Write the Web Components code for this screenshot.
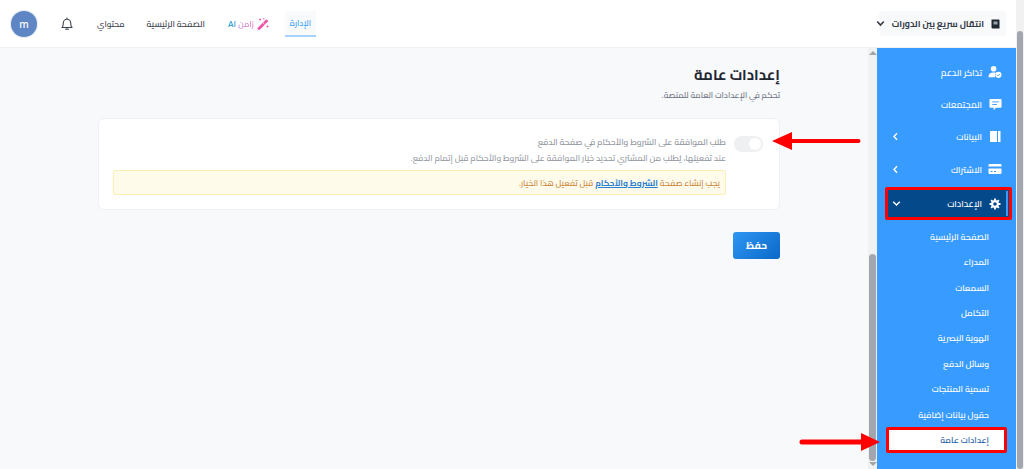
<!DOCTYPE html>
<html lang="ar" dir="rtl">
<head>
<meta charset="utf-8">
<title>إعدادات عامة</title>
<style>
  html, body { margin: 0; height: 469px; overflow: hidden; background: #fff; }
  body { font-family: Cairo, "Noto Sans Arabic", "DejaVu Sans", sans-serif; }
</style>
</head>
<body>
<app-shell>
  <top-bar slot="top"></top-bar>
  <side-nav slot="side"></side-nav>
  <settings-page slot="main"></settings-page>
</app-shell>

<script>
class AppShell extends HTMLElement {
  constructor() {
    super();
    this.attachShadow({ mode: 'open' });
    this.shadowRoot.innerHTML = `
      <style>
        :host { display:flex; height:469px; width:1024px; position:relative; }
        .page-bar { width:8px; flex:none; background:#f1f1f1; display:flex; flex-direction:column; padding-top:31px; box-sizing:border-box; }
        .page-bar i { display:block; flex:1; background:#a2a6ae; border-radius:4px; margin:0 1px; }
        .col { flex:1; display:flex; flex-direction:column; min-width:0; }
        .row { flex:1; display:flex; min-height:0; }
        .inner-bar { width:9px; flex:none; background:#f1f1f1; display:flex; flex-direction:column; align-items:center; justify-content:space-between; padding:3px 0; box-sizing:border-box; }
        .inner-bar b { width:0; height:0; border:4px solid transparent; border-top:0; border-bottom:4px solid #a3a3a3; }
        .inner-bar b.down { border-bottom:0; border-top:4px solid #a3a3a3; }
        .inner-bar i { display:block; width:7px; height:207px; background:#a2a6ae; border-radius:4px; margin-top:auto; margin-bottom:1px; }
        .red-arrow { position:absolute; }
      </style>
      <div class="page-bar"><i></i></div>
      <div class="col">
        <slot name="top"></slot>
        <div class="row">
          <slot name="side"></slot>
          <div class="inner-bar"><b></b><i></i><b class="down"></b></div>
          <slot name="main"></slot>
        </div>
      </div>
      <svg class="red-arrow" style="left:772px;top:131px" width="90" height="20" viewBox="0 0 90 20"><path d="M86.500 8H20V1L0 10l20 9v-7h66.500a2 2 0 0 0 0-4z" fill="#f00"/></svg>
      <svg class="red-arrow" style="left:799px;top:432px" width="82" height="20" viewBox="0 0 82 20"><path d="M3 7.500h59V1l19 9-19 9v-6.500H3a2.500 2.500 0 0 1 0-5z" fill="#f00"/></svg>
    `;
  }
}

class TopBar extends HTMLElement {
  constructor() {
    super();
    this.attachShadow({ mode: 'open' });
    this.shadowRoot.innerHTML = `
      <style>
        :host { display:flex; flex:none; height:48px; box-sizing:border-box; background:#fff; border-bottom:1px solid #f0f1f3; align-items:center; justify-content:space-between; padding:0 10px 0 11px; }
        .switch { display:flex; align-items:center; gap:7px; height:25px; width:127px; box-sizing:border-box; background:#f8f9fb; border-radius:4px; padding:0 6px; font-size:8.900px; font-weight:700; color:#333a45; white-space:nowrap; }
        .switch svg { flex:none; }
        .switch svg:last-child { margin-right:auto; }
        nav { display:flex; align-items:center; font-size:8.200px; font-weight:600; color:#3d4450; white-space:nowrap; }
        .tab { color:#38a1f5; height:26px; display:flex; align-items:center; justify-content:center; width:31px; border-bottom:2px solid #a3d2fb; background:#f8fafc; box-sizing:border-box; margin-left:16px; }
        .ai { display:flex; align-items:center; gap:3px; margin-left:23px; }
        .ai svg { flex:none; }
        .ai span { font-family:Inter, Cairo, sans-serif; background:linear-gradient(90deg,#2aa5d8 0%,#5fa0d8 32%,#c68ad8 45%,#e46fc0 100%); -webkit-background-clip:text; background-clip:text; color:transparent; }
        .home { margin-left:22px; font-size:8.600px; }
        .mine { margin-left:23px; }
        .bell { margin-left:23px; display:flex; }
        .avatar { width:26px; height:26px; border-radius:50%; background:#5e86c4; color:#fff; font-family:"Noto Sans",sans-serif; font-size:10px; font-weight:500; display:flex; align-items:center; justify-content:center; box-shadow:0 0 0 1px #e4e9f2; }
      </style>
      <div class="switch">
        <svg width="9" height="10" viewBox="0 0 9 10"><path d="M.500.500h7a1 1 0 0 1 1 1v8h-7a1 1 0 0 1-1-1z" fill="#1f2733"/><path d="M2.500 2.500h4v3h-4z" fill="#9aa2ad"/></svg>
        <span>انتقال سريع بين الدورات</span>
        <svg width="9" height="7" viewBox="0 0 9 7"><path d="M1.200 1.500 4.500 5l3.300-3.500" fill="none" stroke="#333a45" stroke-width="1.600"/></svg>
      </div>
      <nav>
        <span class="tab">الإدارة</span>
        <span class="ai">
          <svg width="12" height="12" viewBox="0 0 12 12"><path d="M2 10.500 9.500 3" stroke="#ee5aa8" stroke-width="3" stroke-linecap="round"/><path d="M5.800 4.500l1.700 1.700" stroke="#fff" stroke-width=".8"/><path d="M2 1.500h2M3 .5v2M9.500 8.500h2M10.500 7.500v2M6 .8h1.500" stroke="#ee5aa8" stroke-width="1"/></svg>
          <span>زامن AI</span>
        </span>
        <span class="home">الصفحة الرئيسية</span>
        <span class="mine">محتواي</span>
        <span class="bell"><svg width="14" height="15" viewBox="0 0 14 15"><path d="M2 11.500c1-1 1.300-2 1.300-4.500a3.700 3.700 0 0 1 7.400 0c0 2.500.3 3.500 1.300 4.500z" fill="none" stroke="#3b4250" stroke-width="1.100" stroke-linejoin="round"/><path d="M5.800 13.200h2.400" stroke="#3b4250" stroke-width="1.300" stroke-linecap="round"/><path d="M7 1.500v1.500" stroke="#3b4250" stroke-width="1"/></svg></span>
        <span class="avatar">m</span>
      </nav>
    `;
  }
}

const ICONS = {
  tickets: '<svg width="15" height="14" viewBox="0 0 15 14"><circle cx="6" cy="3.500" r="3" fill="#fff"/><path d="M0.500 12.500c0-3.500 2-5 5.500-5 1 0 1.800.1 2.500.4a4 4 0 0 0-.6 4.600z" fill="#fff"/><circle cx="11.200" cy="10" r="3.300" fill="#fff"/><path d="M9.700 10l1.100 1.100 1.800-1.900" fill="none" stroke="#389bff" stroke-width=".9"/></svg>',
  chat: '<svg width="13" height="13" viewBox="0 0 14 14"><path d="M1.500 1h11a1 1 0 0 1 1 1v7.500a1 1 0 0 1-1 1H7.500L5 13.200V10.500H1.500a1 1 0 0 1-1-1V2a1 1 0 0 1 1-1z" fill="#fff"/><path d="M3.500 4.200h7M3.500 7h5" stroke="#389bff" stroke-width="1"/></svg>',
  book: '<svg width="14" height="13" viewBox="0 0 14 13"><path d="M2 1h7v11H2zM10 1h2.500v11H10z" fill="#fff"/></svg>',
  card: '<svg width="14" height="12" viewBox="0 0 14 12"><path d="M1.500 1h11a1 1 0 0 1 1 1v1.500H.5V2a1 1 0 0 1 1-1zM.5 5.500h13V10a1 1 0 0 1-1 1h-11a1 1 0 0 1-1-1z" fill="#fff"/><path d="M2.500 8.500h2M6 8.500h2" stroke="#389bff" stroke-width="1"/></svg>',
  gear: '<svg width="12" height="12" viewBox="0 0 14 14"><circle cx="7" cy="7" r="3.400" fill="none" stroke="#fff" stroke-width="2.600"/><path d="M7 .6v2.400M7 11v2.400M.6 7H3M11 7h2.400M2.500 2.500l1.700 1.700M9.800 9.800l1.700 1.700M11.500 2.500 9.800 4.200M4.200 9.800l-1.700 1.700" stroke="#fff" stroke-width="2.200"/></svg>'
};

class NavItem extends HTMLElement {
  constructor() {
    super();
    this.attachShadow({ mode: 'open' });
  }
  connectedCallback() {
    const icon = ICONS[this.getAttribute('icon')] || '';
    const arrow = this.getAttribute('arrow');
    let chev = '';
    if (arrow === 'left') chev = '<svg class="chev" width="7" height="9" viewBox="0 0 7 9"><path d="M5 1.200 2 4.500 5 7.800" fill="none" stroke="#fff" stroke-width="1.400"/></svg>';
    if (arrow === 'down') chev = '<svg class="chev" width="9" height="7" viewBox="0 0 9 7"><path d="M1.200 1.800 4.500 5l3.300-3.200" fill="none" stroke="#fff" stroke-width="1.400"/></svg>';
    this.shadowRoot.innerHTML = `
      <style>
        :host { display:flex; align-items:center; box-sizing:border-box; height:32.300px; padding:0 14px 0 0; gap:6px; color:#fff; font-size:8.900px; font-weight:600; white-space:nowrap; position:relative; }
        :host([sel]) { height:33px; margin:2px 4px 0 8px; padding-right:7px; background:#04498a; border:3px solid #f00; border-radius:2px; }
        :host([sel])::before { content:""; position:absolute; right:1px; top:1px; bottom:1px; width:2px; background:#389bff; }
        .ic { width:14px; display:flex; justify-content:center; flex:none; }
        .chev { margin-right:auto; margin-left:15px; }
        :host([sel]) .chev { margin-left:4px; }
      </style>
      <span class="ic">${icon}</span><slot></slot>${chev}
    `;
  }
}

class SideNav extends HTMLElement {
  constructor() {
    super();
    this.attachShadow({ mode: 'open' });
    this.shadowRoot.innerHTML = `
      <style>
        :host { display:block; width:139px; flex:none; background:#389bff; box-sizing:border-box; padding-top:8px; overflow:hidden; }
        .sub { display:flex; flex-direction:column; margin-top:4px; }
        .sub a { display:flex; align-items:center; height:25.400px; flex:none; box-sizing:border-box; padding-right:27px; color:#fff; font-size:8.700px; font-weight:600; white-space:nowrap; }
        .sub a.on { background:#fff; color:#1f5da6; height:26px; margin:0 9px; padding-right:15px; border:3px solid #f00; border-radius:2px; }
      </style>
      <nav-item icon="tickets">تذاكر الدعم</nav-item>
      <nav-item icon="chat">المجتمعات</nav-item>
      <nav-item icon="book" arrow="left">البيانات</nav-item>
      <nav-item icon="card" arrow="left">الاشتراك</nav-item>
      <nav-item icon="gear" arrow="down" sel>الإعدادات</nav-item>
      <div class="sub">
        <a>الصفحة الرئيسية</a>
        <a>المدراء</a>
        <a>السمعات</a>
        <a>التكامل</a>
        <a>الهوية البصرية</a>
        <a>وسائل الدفع</a>
        <a>تسمية المنتجات</a>
        <a>حقول بيانات إضافية</a>
        <a class="on">إعدادات عامة</a>
      </div>
    `;
  }
}

class ToggleSwitch extends HTMLElement {
  constructor() {
    super();
    this.attachShadow({ mode: 'open' });
    this.shadowRoot.innerHTML = `
      <style>
        :host { display:flex; flex:none; width:29px; height:16px; background:#eff0f2; border-radius:8px; padding:2px; box-sizing:border-box; justify-content:flex-start; margin-top:2px; }
        i { width:12px; height:12px; background:#fff; border-radius:50%; }
      </style>
      <i></i>
    `;
  }
}

class SettingsPage extends HTMLElement {
  constructor() {
    super();
    this.attachShadow({ mode: 'open' });
    this.shadowRoot.innerHTML = `
      <style>
        :host { display:block; flex:1; min-width:0; background:#f8f9fb; box-sizing:border-box; padding:16px 88px 0 98px; color:#1f2733; }
        h1 { margin:0; font-size:14.800px; line-height:22px; font-weight:700; color:#1f2733; }
        .desc { margin:2px 0 0; font-size:8.300px; line-height:14px; font-weight:500; color:#6b7280; }
        .card { margin-top:16px; background:#fff; border:1px solid #eef0f3; border-radius:6px; height:92px; box-sizing:border-box; padding:15px 16px 0 14px; display:flex; gap:8px; align-items:flex-start; }
        .body { flex:1; min-width:0; }
        .txt { font-size:8.500px; color:#92979f; line-height:16px; font-weight:500; }
        .txt b { display:block; font-weight:600; }
        .alert { margin-top:4px; height:25px; box-sizing:border-box; background:#fffbeb; border:1px solid #fdeeb5; border-radius:2px; display:flex; align-items:center; padding:0 5px; font-size:8.500px; font-weight:500; color:#c9853a; }
        .alert a { color:#2a7fd0; text-decoration:underline; font-weight:700; margin:0 2px; }
        .save { display:flex; align-items:center; justify-content:center; margin-top:22px; width:47px; height:27px; border-radius:3px; background:linear-gradient(135deg,#2f97f3,#0a68c8); color:#fff; font-size:10px; font-weight:700; }
      </style>
      <h1>إعدادات عامة</h1>
      <p class="desc">تحكم في الإعدادات العامة للمنصة.</p>
      <div class="card">
        <toggle-switch></toggle-switch>
        <div class="body">
          <div class="txt">
            <b>طلب الموافقة على الشروط والأحكام في صفحة الدفع</b>
            عند تفعيلها، يُطلب من المشتري تحديد خيار الموافقة على الشروط والأحكام قبل إتمام الدفع.
          </div>
          <div class="alert">يجب إنشاء صفحة<a>الشروط والأحكام</a>قبل تفعيل هذا الخيار.</div>
        </div>
      </div>
      <div class="save">حفظ</div>
    `;
  }
}

customElements.define('app-shell', AppShell);
customElements.define('top-bar', TopBar);
customElements.define('nav-item', NavItem);
customElements.define('side-nav', SideNav);
customElements.define('toggle-switch', ToggleSwitch);
customElements.define('settings-page', SettingsPage);
</script>
</body>
</html>
